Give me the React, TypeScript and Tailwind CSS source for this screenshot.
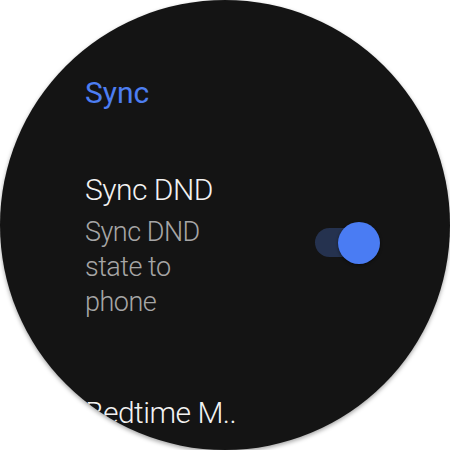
export default function App() {
  return (
    <div className="w-[450px] h-[450px] bg-white">
      <div
        className="w-[450px] h-[450px] rounded-full bg-[#141414] overflow-hidden shadow-[0_2px_4px_rgba(0,0,0,0.35)] pl-[85px] pt-[75px]"
        style={{ fontFamily: "Roboto, 'Noto Sans', sans-serif" }}
      >
        {/* Section header */}
        <div className="text-[30px] leading-[36px] text-[#4d7ef2]">Sync</div>

        {/* Sync DND row */}
        <div className="flex items-center mt-[61px] pr-[70px]">
          <div className="flex-1 min-w-0">
            <div className="text-[30px] leading-[36px] font-light tracking-[-0.5px] text-[#f2f2f2]">
              Sync DND
            </div>
            <div className="mt-[7px] w-[130px] text-[27px] leading-[35px] font-light tracking-[-0.5px] text-[#a6a6a6]">
              Sync DND state to phone
            </div>
          </div>
          <div className="relative w-[65px] h-[42px] -mt-[6px]">
            <div className="absolute left-0 top-[6px] w-[50px] h-[29px] rounded-full bg-[#25324f]" />
            <div className="absolute right-0 top-0 w-[42px] h-[42px] rounded-full bg-[#4a7cf3] shadow-[0_1px_3px_rgba(0,0,0,0.5)]" />
          </div>
        </div>

        {/* Next row, clipped by the round screen */}
        <div className="mt-[75px] text-[30px] leading-[36px] font-light tracking-[-0.5px] text-[#f2f2f2] whitespace-nowrap">
          Bedtime M..
        </div>
      </div>
    </div>
  );
}
